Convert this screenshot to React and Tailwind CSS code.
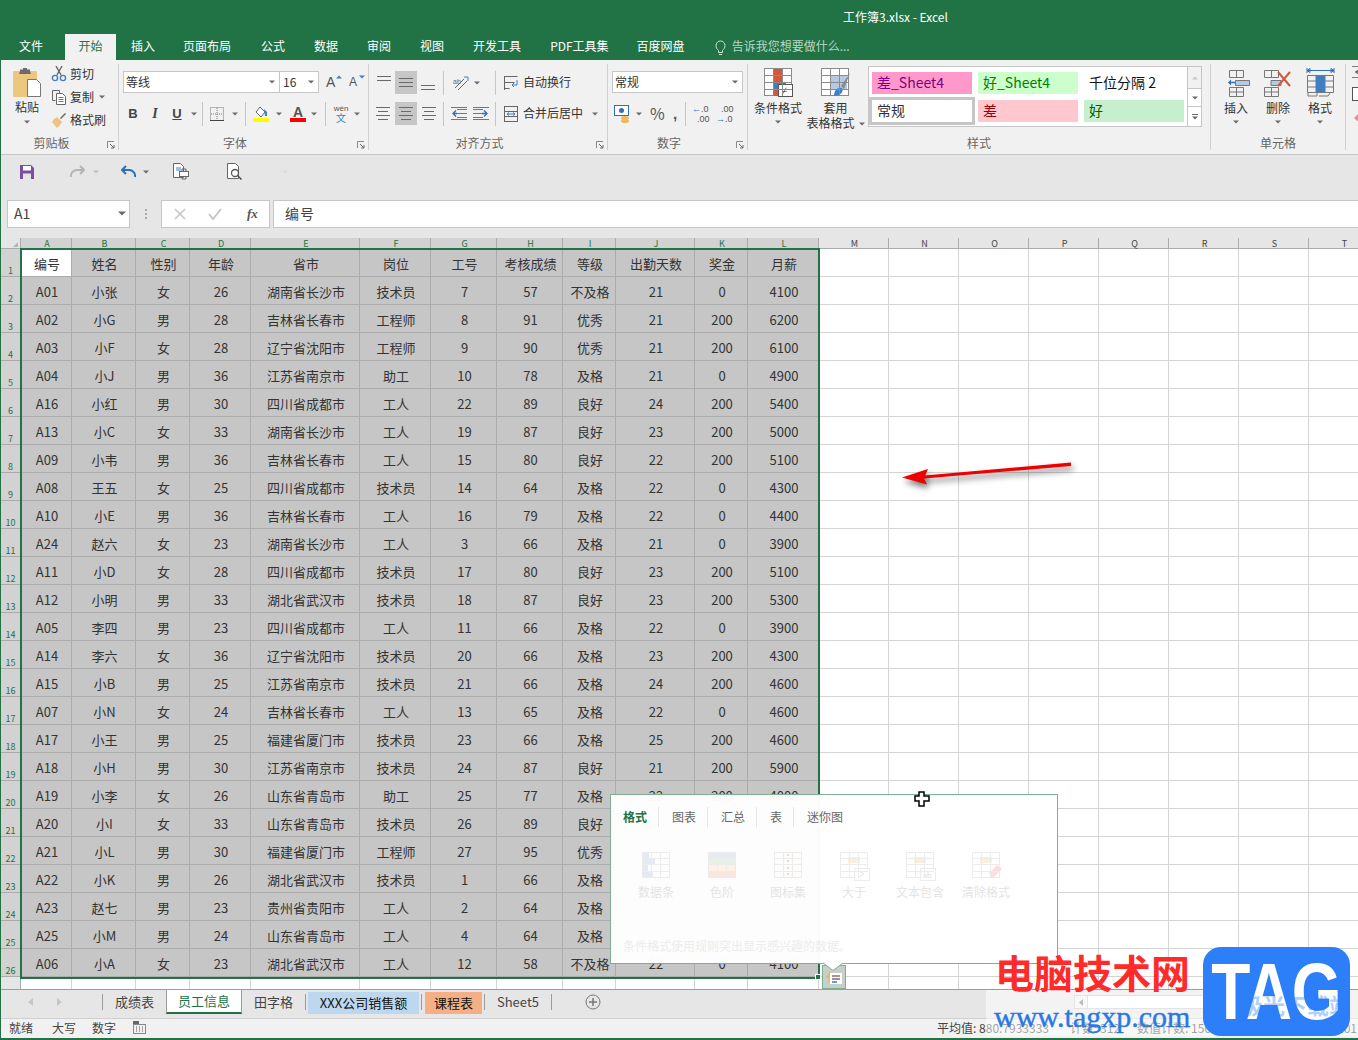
const gridLine = 'border-[#d4d4d4]';

const letters = ['A', 'B', 'C', 'D', 'E', 'F', 'G', 'H', 'I', 'J', 'K', 'L', 'M', 'N', 'O', 'P', 'Q', 'R', 'S', 'T'];

const rows = [
  '编号 姓名 性别 年龄 省市 岗位 工号 考核成绩 等级 出勤天数 奖金 月薪',
  'A01 小张 女 26 湖南省长沙市 技术员 7 57 不及格 21 0 4100',
  'A02 小G 男 28 吉林省长春市 工程师 8 91 优秀 21 200 6200',
  'A03 小F 女 28 辽宁省沈阳市 工程师 9 90 优秀 21 200 6100',
  'A04 小J 男 36 江苏省南京市 助工 10 78 及格 21 0 4900',
  'A16 小红 男 30 四川省成都市 工人 22 89 良好 24 200 5400',
  'A13 小C 女 33 湖南省长沙市 工人 19 87 良好 23 200 5000',
  'A09 小韦 男 36 吉林省长春市 工人 15 80 良好 22 200 5100',
  'A08 王五 女 25 四川省成都市 技术员 14 64 及格 22 0 4300',
  'A10 小E 男 36 吉林省长春市 工人 16 79 及格 22 0 4400',
  'A24 赵六 女 23 湖南省长沙市 工人 3 66 及格 21 0 3900',
  'A11 小D 女 28 四川省成都市 技术员 17 80 良好 23 200 5100',
  'A12 小明 男 33 湖北省武汉市 技术员 18 87 良好 23 200 5300',
  'A05 李四 男 23 四川省成都市 工人 11 66 及格 22 0 3900',
  'A14 李六 女 36 辽宁省沈阳市 技术员 20 66 及格 23 200 4300',
  'A15 小B 男 25 江苏省南京市 技术员 21 66 及格 24 200 4600',
  'A07 小N 女 24 吉林省长春市 工人 13 65 及格 22 0 4600',
  'A17 小王 男 25 福建省厦门市 技术员 23 66 及格 25 200 4600',
  'A18 小H 男 30 江苏省南京市 技术员 24 87 良好 21 200 5900',
  'A19 小李 女 26 山东省青岛市 助工 25 77 及格 22 200 4000',
  'A20 小I 女 33 山东省青岛市 技术员 26 89 良好',
  'A21 小L 男 30 福建省厦门市 工程师 27 95 优秀',
  'A22 小K 男 26 湖北省武汉市 技术员 1 66 及格',
  'A23 赵七 男 23 贵州省贵阳市 工人 2 64 及格',
  'A25 小M 男 24 山东省青岛市 工人 4 64 及格',
  'A06 小A 女 23 湖北省武汉市 工人 12 58 不及格 22 0 4100',
].map((r) => r.split(' '));

function Ico({ w, h, className = '', children }) {
  return (
    <svg width={w} height={h} viewBox={`0 0 ${w} ${h}`} fill="none" className={`shrink-0 ${className}`}>
      {children}
    </svg>
  );
}

function Chev({ className = '', color = '#6a6a6a' }) {
  return (
    <Ico w={6} h={4} className={className}>
      <path d="M0 0.5h6L3 3.5z" fill={color} />
    </Ico>
  );
}

function Launcher() {
  return (
    <Ico w={8} h={8} className="absolute right-[3px] bottom-[1px]">
      <path d="M0.5 7V0.5H7" stroke="#8a8a8a" />
      <path d="M3 3l4 4M7 4v3H4" stroke="#6a6a6a" />
    </Ico>
  );
}

function Lines({ widths, x = 0 }) {
  // stack of text lines used by the alignment buttons
  return (
    <Ico w={16} h={widths.length * 4}>
      {widths.map((l, i) => (
        <path key={i} d={`M${x + (16 - l) / 2} ${i * 4 + 1.5}h${l}`} stroke="#6a6a6a" />
      ))}
    </Ico>
  );
}

function GroupLabel({ children, className = '' }) {
  return <div className={`mt-auto h-[14px] text-center text-[12px] leading-[14px] text-[#666] ${className}`}>{children}</div>;
}

function Sep({ className = '' }) {
  return <div className={`h-[24px] w-px shrink-0 bg-[#c6c6c6] ${className}`} />;
}

function Clipboard() {
  return (
    <div className="ml-[6px] flex w-[40px] flex-col items-center pt-[4px]">
      <Ico w={29} h={29}>
        <rect x="0" y="3" width="24" height="26" rx="1" fill="#edc67f" />
        <path d="M7 3V1.5h3V0h4v1.5h3V3l1 3H6z" fill="#6b6b6b" />
        <path d="M14.5 11.5h9l4 4v13h-13z" fill="#fff" stroke="#777" />
      </Ico>
      <div className="mt-[3px] text-[12px] leading-[14px] text-[#333]">粘贴</div>
      <Chev className="mt-[6px]" />
    </div>
  );
}

function ClipActions() {
  return (
    <div className="ml-[4px] flex flex-col gap-[3px] text-[12px] text-[#333]">
      <div className="flex h-[20px] items-center">
        <Ico w={16} h={16}>
          <path d="M5 0l5 9M11 0L6 9" stroke="#666" strokeWidth="1.4" />
          <circle cx="4" cy="12" r="2.6" stroke="#3f7fc1" strokeWidth="1.4" />
          <circle cx="12" cy="12" r="2.6" stroke="#3f7fc1" strokeWidth="1.4" />
        </Ico>
        <span className="ml-[3px]">剪切</span>
      </div>
      <div className="flex h-[20px] items-center">
        <Ico w={16} h={16}>
          <path d="M1.5 1.5h7v3M1.5 1.5v10h3" stroke="#666" />
          <path d="M5.5 4.5h6l3 3v8h-9z" fill="#fff" stroke="#666" />
          <path d="M7.5 8.5h5M7.5 10.5h5M7.5 12.5h5" stroke="#3f7fc1" />
        </Ico>
        <span className="ml-[3px]">复制</span>
        <Chev className="ml-[5px]" />
      </div>
      <div className="flex h-[20px] items-center">
        <Ico w={16} h={16}>
          <path d="M9 6l5-5 1 1-5 5z" fill="#666" />
          <path d="M3 7l3-2 5 5-2 3-3 3-5-6z" fill="#eec27f" />
        </Ico>
        <span className="ml-[3px]">格式刷</span>
      </div>
    </div>
  );
}

function FontGroup() {
  return (
    <div className="flex h-full flex-col px-[3px]">
      <div className="mt-[7px] flex h-[22px] items-center">
        <div className="ml-px flex h-[22px] w-[157px] items-center border border-[#c6c6c6] bg-white pl-[2px] text-[12px] text-[#333]">
          等线
          <Chev className="mr-[4px] ml-auto" />
        </div>
        <div className="flex h-[22px] w-[39px] items-center border border-l-0 border-[#c6c6c6] bg-white pl-[3px] text-[12px] text-[#333]">
          16
          <Chev className="mr-[4px] ml-auto" />
        </div>
        <div className="relative ml-[7px] w-[14px] font-['Liberation_Sans'] text-[14px] leading-[14px] text-[#555]">
          A
          <Ico w={6} h={4} className="absolute top-0 -right-[2px]"><path d="M0 3.5h6L3 0.5z" fill="#3f7fc1" /></Ico>
        </div>
        <div className="relative ml-[9px] w-[13px] font-['Liberation_Sans'] text-[12px] leading-[14px] text-[#555]">
          A
          <Ico w={6} h={4} className="absolute top-0 -right-[3px]"><path d="M0 0.5h6L3 3.5z" fill="#3f7fc1" /></Ico>
        </div>
      </div>
      <div className="mt-[9px] flex h-[23px] items-center text-[#444]">
        <div className="w-[22px] text-center font-['Liberation_Sans'] text-[13px] font-bold">B</div>
        <div className="w-[22px] text-center font-['Liberation_Serif'] text-[14px] font-bold italic">I</div>
        <div className="w-[22px] text-center font-['Liberation_Sans'] text-[13px] font-bold underline">U</div>
        <Chev className="ml-[3px]" />
        <Sep className="ml-[5px]" />
        <div className="flex w-[28px] justify-center">
          <Ico w={14} h={14}>
            <rect x="0.5" y="0.5" width="13" height="13" stroke="#777" strokeDasharray="1 1" />
            <path d="M7 1v12M1 7h12" stroke="#777" strokeDasharray="1 1" />
            <path d="M0 13.5h14" stroke="#444" />
          </Ico>
        </div>
        <Chev className="ml-px" />
        <Sep className="ml-[7px]" />
        <div className="flex w-[30px] flex-col items-center">
          <Ico w={16} h={12}>
            <path d="M7 1l5 5-4 5-5-5z" fill="#fff" stroke="#666" />
            <path d="M11 3l3 3v4h-2z" fill="#3f7fc1" />
          </Ico>
          <div className="h-[4px] w-[16px] bg-[#ffff00]" />
        </div>
        <Chev />
        <div className="ml-[4px] flex w-[24px] flex-col items-center">
          <span className="font-['Liberation_Sans'] text-[14px] leading-[12px] font-bold text-[#555]">A</span>
          <div className="h-[4px] w-[16px] bg-[#ff0000]" />
        </div>
        <Chev className="ml-[1px]" />
        <Sep className="ml-[8px]" />
        <div className="flex w-[30px] flex-col items-center leading-none">
          <span className="font-['Liberation_Sans'] text-[8px] text-[#555]">wén</span>
          <span className="text-[10px] text-[#3f7fc1]">文</span>
        </div>
        <Chev className="-ml-[2px]" />
      </div>
    </div>
  );
}

function AlignGroup() {
  const iconLine = 'flex h-[23px] w-[22px] items-center justify-center';
  return (
    <div className="flex h-full flex-col pl-[4px]">
      <div className="mt-[7px] flex h-[23px] items-center text-[12px] text-[#333]">
        <div className={`${iconLine} items-start pt-[4px]`}><Lines widths={[14, 14]} /></div>
        <div className={`${iconLine} bg-[#c6c6c6]`}><Lines widths={[14, 14, 14]} /></div>
        <div className={`${iconLine} items-end pb-[2px]`}><Lines widths={[14, 14]} /></div>
        <Sep className="ml-[4px]" />
        <div className="ml-[9px] flex w-[16px] justify-center">
          <Ico w={16} h={16}>
            <path d="M2 13l9-9M5 15l9-9" stroke="#666" />
            <path d="M11 2h4v4" stroke="#3f7fc1" />
            <text x="0" y="9" fontSize="7" fill="#666" fontFamily="Liberation Sans">ab</text>
          </Ico>
        </div>
        <Chev className="ml-[5px]" />
        <Sep className="ml-[15px]" />
        <Ico w={14} h={16} className="ml-[8px]">
          <path d="M0.5 1.5h13M0.5 7.5h10M0.5 13.5h5M0.5 1v14" stroke="#666" />
          <path d="M13 5v5H8M10 8l-2 2 2 2" stroke="#3f7fc1" />
        </Ico>
        <span className="ml-[5px] pb-[2px]">自动换行</span>
      </div>
      <div className="mt-[8px] flex h-[23px] items-center text-[12px] text-[#333]">
        <div className={iconLine}><Lines widths={[14, 10, 14, 10]} x={-1} /></div>
        <div className={`${iconLine} bg-[#c6c6c6]`}><Lines widths={[14, 10, 14, 10]} /></div>
        <div className={iconLine}><Lines widths={[14, 10, 14, 10]} x={1} /></div>
        <Sep className="ml-[4px]" />
        <Ico w={16} h={13} className="ml-[7px]">
          <path d="M6 2.5h10M6 6.5h10M6 10.5h10M0 0.5h16M0 12.5h16" stroke="#777" />
          <path d="M5 3.500l-3 3 3 3M2 6.500h4" stroke="#2f6fb5" strokeWidth="1.3" />
        </Ico>
        <Ico w={16} h={13} className="ml-[6px]">
          <path d="M0 2.5h10M0 6.5h10M0 10.500h10M0 0.500h16M0 12.500h16" stroke="#777" />
          <path d="M11 3.500l3 3-3 3M14 6.500h-5" stroke="#2f6fb5" strokeWidth="1.3" />
        </Ico>
        <Sep className="ml-[6px]" />
        <Ico w={14} h={16} className="ml-[8px]">
          <rect x="0.5" y="0.5" width="13" height="15" stroke="#666" />
          <path d="M0 5.500h14M0 10.500h14" stroke="#666" />
          <path d="M3 8h8M3 8l2-1.500M3 8l2 1.500M11 8L9 6.500M11 8L9 9.500" stroke="#3f7fc1" />
        </Ico>
        <span className="ml-[5px] pb-[2px]">合并后居中</span>
        <Chev className="ml-[9px]" />
      </div>
    </div>
  );
}

function NumberGroup() {
  return (
    <div className="flex h-full flex-col pl-[4px]">
      <div className="mt-[7px] flex h-[22px] w-[131px] items-center border border-[#c6c6c6] bg-white pl-[2px] text-[12px] text-[#333]">
        常规
        <Chev className="mr-[4px] ml-auto" />
      </div>
      <div className="mt-[9px] flex h-[23px] items-center text-[#555]">
        <Ico w={17} h={18} className="ml-[2px]">
          <rect x="0.500" y="0.500" width="14" height="10" fill="#fff" stroke="#2f6fb5" />
          <circle cx="7.500" cy="5.500" r="2.500" fill="#2f6fb5" />
          <ellipse cx="11" cy="13" rx="4" ry="2" fill="#e8b95f" />
          <ellipse cx="11" cy="16" rx="4" ry="2" fill="#e8b95f" />
        </Ico>
        <Chev className="ml-[5px]" />
        <span className="ml-[8px] w-[14px] text-[16px] leading-[23px]">%</span>
        <span className="ml-[9px] w-[6px] font-['Liberation_Sans'] text-[15px] leading-[19px] font-bold">,</span>
        <Sep className="ml-[6px]" />
        <div className="ml-[6px] flex w-[15px] flex-col font-['Liberation_Sans'] text-[9px] leading-[10px] text-[#555]">
          <span className="whitespace-nowrap"><span className="text-[#2f6fb5]">←</span>.0</span>
          <span className="pl-[5px]">.00</span>
        </div>
        <div className="ml-[9px] flex w-[15px] flex-col font-['Liberation_Sans'] text-[9px] leading-[10px] text-[#555]">
          <span className="pl-[5px]">.00</span>
          <span className="whitespace-nowrap"><span className="text-[#2f6fb5]">→</span>.0</span>
        </div>
      </div>
    </div>
  );
}

function MiniGrid({ children, w = 29, h = 29 }) {
  return (
    <Ico w={w} h={h}>
      <rect x="0.500" y="0.500" width="27" height="27" fill="#fff" stroke="#8a8a8a" />
      {children}
      <path d="M9.500 0v28M18.500 0v28M0 7.500h28M0 14.500h28M0 21.500h28" stroke="#8a8a8a" />
    </Ico>
  );
}

function StylesGroup() {
  return (
    <div className="flex h-full flex-col">
      <div className="flex items-start">
        <div className="ml-[5px] flex w-[50px] flex-col items-center pt-[4px] text-[12px] leading-[14px] text-[#333]">
          <MiniGrid>
            <rect x="10" y="1" width="8" height="6" fill="#d2583a" />
            <rect x="10" y="8" width="8" height="6" fill="#d2583a" />
            <rect x="10" y="15" width="12" height="6" fill="#3f7fc1" />
            <rect x="10" y="22" width="5" height="6" fill="#d2583a" />
            <rect x="14.500" y="16.500" width="14" height="12" fill="#fff" stroke="#555" />
            <text x="18" y="26" fontSize="10" fill="#333" fontFamily="Liberation Sans">≠</text>
          </MiniGrid>
          <span className="mt-[4px]">条件格式</span>
          <Chev className="mt-[5px]" />
        </div>
        <div className="flex w-[65px] flex-col items-center pt-[4px] text-[12px] leading-[15px] text-[#333]">
          <MiniGrid>
            <rect x="10" y="8" width="16" height="14" fill="#b5c9e2" />
            <path d="M29 5l-9 13 3 3z" fill="#8a8a8a" />
            <path d="M13 28c0-6 4-9 8-8 2 3-1 8-8 8z" fill="#3f7fc1" />
          </MiniGrid>
          <span className="mt-[3px]">套用</span>
          <span>表格格式<Chev className="mb-[2px] ml-[4px] inline" /></span>
        </div>
        <div className="mt-[2px] flex h-[61px] w-[334px] border border-[#c6c6c6] bg-white text-[14px] leading-[20px]">
          <div className="grid h-fit grid-cols-[100px_100px_100px] gap-x-[6px] gap-y-[6px] pt-[5px] pl-[3px]">
            <div className="h-[22px] bg-[#ff99cc] pl-[5px] text-[#800080]">差_Sheet4</div>
            <div className="h-[22px] bg-[#ccffcc] pl-[5px] text-[#008000]">好_Sheet4</div>
            <div className="h-[22px] pl-[5px] text-[#111]">千位分隔 2</div>
            <div className="h-[22px] bg-white pl-[5px] text-[#333] outline-[3px] outline-[#c6c6c6]">常规</div>
            <div className="h-[22px] bg-[#ffc7ce] pl-[5px] text-[#9c0006]">差</div>
            <div className="h-[22px] bg-[#c6efce] pl-[5px] text-[#006100]">好</div>
          </div>
          <div className="ml-[3px] flex w-[14px] flex-col border-l border-[#c6c6c6]">
            <div className="flex h-[21px] items-center justify-center bg-[#f1f1f1]">
              <Ico w={6} h={4}><path d="M0 3.500h6L3 0.500z" fill="#c6c6c6" /></Ico>
            </div>
            <div className="flex h-[19px] items-center justify-center border-y border-[#c6c6c6]"><Chev /></div>
            <div className="flex h-[19px] flex-col items-center justify-center">
              <div className="mb-px h-px w-[6px] bg-[#6a6a6a]" />
              <Chev />
            </div>
          </div>
        </div>
      </div>
      <GroupLabel>样式</GroupLabel>
    </div>
  );
}

function CellsGroup() {
  const col = 'flex w-[42px] flex-col items-center pt-[4px] text-[12px] leading-[14px] text-[#333]';
  return (
    <div className="flex pl-[4px]">
      <div className={col}>
        <Ico w={27} h={29}>
          <path d="M6.500 2.500h14v7h-14zM13.500 2v8M6.500 19.500h14v9h-14zM6.500 24h14M13.500 19v10" stroke="#777" />
          <path d="M6 14.500h8" stroke="#2f6fb5" strokeWidth="1.500" />
          <path d="M5 14.500l3-3v6z" fill="#2f6fb5" />
          <path d="M12.500 12.500h14v5h-14z" fill="#b5c9e2" stroke="#777" />
        </Ico>
        <span className="mt-[4px]">插入</span>
        <Chev className="mt-[5px]" />
      </div>
      <div className={col}>
        <Ico w={30} h={29}>
          <path d="M1.500 2.500h14v7h-14zM8.500 2v8M1.500 19.500h14v9h-14zM1.500 24h14M8.500 19v10" stroke="#777" />
          <path d="M8 12.500h10v5H8z" fill="#b5c9e2" stroke="#777" />
          <path d="M15 4l12 14M27 4L15 18" stroke="#d2583a" strokeWidth="2" />
        </Ico>
        <span className="mt-[4px]">删除</span>
        <Chev className="mt-[5px]" />
      </div>
      <div className={col}>
        <Ico w={29} h={29}>
          <path d="M1 2.500h27M1 0v5M28 0v5M1 2.500l3-2v4zM28 2.500l-3-2v4z" stroke="#2f6fb5" />
          <path d="M1.500 7.500h26v17h-26zM1.500 13h26M1.500 19h26M10 7v17M19 7v17" stroke="#777" />
          <rect x="10" y="8" width="9" height="16" fill="#3f7fc1" />
          <path d="M2 25v3h9v-3M13 28h9l2-3" stroke="#777" />
        </Ico>
        <span className="mt-[4px]">格式</span>
        <Chev className="mt-[5px]" />
      </div>
    </div>
  );
}

function Ribbon() {
  const group = 'relative my-[4px] flex shrink-0 flex-col border-r border-[#d0d0d0]';
  return (
    <div className="flex h-[95px] shrink-0 overflow-hidden border-b border-[#c6c6c6] bg-[#f1f1f1]">
      <div className={`${group} w-[118px]`}>
        <div className="flex">
          <Clipboard />
          <ClipActions />
        </div>
        <GroupLabel className="pr-[16px]">剪贴板</GroupLabel>
        <Launcher />
      </div>
      <div className={`${group} w-[250px]`}>
        <div className="h-[72px]"><FontGroup /></div>
        <GroupLabel className="pr-[17px]">字体</GroupLabel>
        <Launcher />
      </div>
      <div className={`${group} w-[239px]`}>
        <div className="h-[72px]"><AlignGroup /></div>
        <GroupLabel className="pr-[17px]">对齐方式</GroupLabel>
        <Launcher />
      </div>
      <div className={`${group} w-[140px]`}>
        <div className="h-[72px]"><NumberGroup /></div>
        <GroupLabel className="pr-[17px]">数字</GroupLabel>
        <Launcher />
      </div>
      <div className={`${group} w-[463px]`}>
        <StylesGroup />
      </div>
      <div className={`${group} w-[135px]`}>
        <CellsGroup />
        <GroupLabel>单元格</GroupLabel>
      </div>
      <div className="flex flex-col gap-[9px] pt-[6px] pl-[6px]">
        <Ico w={10} h={12}><path d="M0 0h10v2L4 6l6 4v2H0" stroke="#555" strokeWidth="1.500" /></Ico>
        <Ico w={10} h={14}><rect x="0.500" y="0.500" width="12" height="13" stroke="#555" fill="#fff" /></Ico>
        <Ico w={10} h={12}><path d="M2 8l6-6 2 6-5 3z" fill="#e58fa0" /></Ico>
      </div>
    </div>
  );
}

function QuickAccess() {
  return (
    <div className="flex h-[35px] shrink-0 items-center bg-[#e6e6e6] pb-[2px]">
      <Ico w={14} h={14} className="ml-[19px]">
        <path d="M0 0h11l3 3v11H0z" fill="#7b4ea3" />
        <rect x="3" y="1" width="8" height="4.500" fill="#fff" />
        <rect x="3" y="8.500" width="8" height="5.500" fill="#e6e6e6" />
      </Ico>
      <Ico w={15} h={13} className="ml-[36px]">
        <path d="M14 12a6 6 0 0 0-6-7H1M5 1L1 5l4 4" stroke="#b4b4b4" strokeWidth="2" transform="matrix(-1 0 0 1 15 0)" />
      </Ico>
      <Chev className="ml-[8px]" color="#c0c0c0" />
      <Ico w={15} h={13} className="ml-[22px]">
        <path d="M14 12a6 6 0 0 0-6-7H1M5 1L1 5l4 4" stroke="#2f6fb5" strokeWidth="2" />
      </Ico>
      <Chev className="ml-[7px]" />
      <Ico w={16} h={17} className="ml-[24px]">
        <path d="M0.500 0.500h7l3 3v11h-10z" fill="#fff" stroke="#666" />
        <path d="M3 5h5M3 7h5" stroke="#3f7fc1" />
        <rect x="6.500" y="8.500" width="9" height="5" fill="#fff" stroke="#666" />
        <path d="M9 8V6h4v2M9 13v3h4v-3" stroke="#666" />
      </Ico>
      <Ico w={16} h={17} className="ml-[38px]">
        <path d="M0.500 0.500h8l3 3v12h-11z" fill="#fff" stroke="#666" />
        <circle cx="8" cy="10" r="3.500" fill="#fff" stroke="#555" strokeWidth="1.300" />
        <path d="M10.500 12.500l4 4" stroke="#555" strokeWidth="1.600" />
      </Ico>
      <Chev className="ml-[39px]" color="#dcdcdc" />
    </div>
  );
}

function FormulaBar() {
  return (
    <div className="flex h-[48px] shrink-0 items-center bg-[#e6e6e6] pb-[1px]">
      <div className="ml-[6px] flex h-[28px] w-[123px] items-center border border-[#c6c6c6] bg-white pl-[6px] text-[14px] text-[#444]">
        A1
        <Ico w={8} h={5} className="mr-[3px] ml-auto"><path d="M0 0.500h8L4 4.500z" fill="#6a6a6a" /></Ico>
      </div>
      <div className="ml-[15px] flex flex-col gap-[2px]">
        <div className="h-[2px] w-[2px] bg-[#aaa]" />
        <div className="h-[2px] w-[2px] bg-[#aaa]" />
        <div className="h-[2px] w-[2px] bg-[#aaa]" />
      </div>
      <div className="ml-[14px] flex h-[28px] w-[109px] items-center border border-[#c6c6c6] bg-white">
        <Ico w={12} h={12} className="ml-[12px]"><path d="M1 1l10 10M11 1L1 11" stroke="#c6c6c6" strokeWidth="1.600" /></Ico>
        <Ico w={14} h={12} className="ml-[22px]"><path d="M1 6l4 5 8-10" stroke="#c6c6c6" strokeWidth="2" /></Ico>
        <span className="ml-[25px] font-['Liberation_Serif'] text-[13px] font-bold text-[#555] italic">fx</span>
      </div>
      <div className="ml-[3px] flex h-[28px] flex-1 items-center border-y border-l border-[#c6c6c6] bg-white pl-[11px] text-[14px] tracking-[1px] text-[#444]">
        编号
      </div>
    </div>
  );
}

function Row({ index, cells }) {
  return (
    <>
      <div className="flex items-end justify-center border-r border-b border-[#ababab] bg-[#d2d2d2] text-[9px] leading-[11px] text-[#217346]">
        {index + 1}
      </div>
      {Array.from({ length: 12 }).map((_, i) => (
        <div
          key={i}
          className={
            index === 0 && i === 0
              ? 'flex items-center justify-center border-r border-b border-[#ababab] bg-white pt-[2px] pl-[2px] whitespace-nowrap'
              : 'flex items-center justify-center border-r border-b border-[#ababab] bg-[#c6c6c6] pt-[2px] pl-[2px] whitespace-nowrap'
          }
        >
          {cells[i]}
        </div>
      ))}
      {Array.from({ length: 8 }).map((_, i) => (
        <div key={i} className={`border-r border-b ${gridLine}`} />
      ))}
    </>
  );
}

function Sheet() {
  return (
    <div className="relative h-[751px] shrink-0 overflow-hidden bg-white">
      <div className="grid grid-cols-[20px_51px_64px_54px_61px_109px_71px_66px_66px_53px_79px_53px_71px_70px_70px_70px_70px_70px_70px_70px_70px] grid-rows-[11px_repeat(26,28px)_12px] text-[13px] text-[#333]">
        <div className="flex items-end justify-end border-r border-b border-[#ababab] bg-[#e6e6e6] pr-[2px] pb-[1px]">
          <Ico w={5} h={5}><path d="M5 0v5H0z" fill="#b4b4b4" /></Ico>
        </div>
        {letters.map((l, i) => (
          <div
            key={l}
            className={
              i < 12
                ? 'flex items-center justify-center border-r border-b border-[#ababab] bg-[#d2d2d2] pl-[2px] text-[9px] leading-none text-[#217346]'
                : 'flex items-center justify-center border-r border-b border-[#ababab] bg-[#e6e6e6] pl-[2px] text-[9px] leading-none text-[#444]'
            }
          >
            {l}
          </div>
        ))}
        {rows.map((r, ri) => (
          <Row key={ri} index={ri} cells={r} />
        ))}
        <div className="border-r border-[#ababab] bg-[#e6e6e6]" />
        {letters.map((l) => (
          <div key={l} className={`border-r ${gridLine}`} />
        ))}
      </div>
      {/* selection frame */}
      <div className="absolute top-[10px] left-[19px] h-[731px] w-[800px] border-2 border-[#217346]" />
      <div className="absolute top-[736px] left-[814px] h-[6px] w-[6px] border border-white bg-[#217346]" />
    </div>
  );
}

function SheetTabs() {
  return (
    <div className="h-[29px] shrink-0 overflow-hidden border-t border-[#9c9c9c] bg-[#e6e6e6] text-[13px] text-[#444]">
      <div className="flex h-[24px] items-stretch">
        <div className="flex w-[101px] items-center">
          <Ico w={5} h={8} className="ml-[27px]"><path d="M5 0v8L0 4z" fill="#c6c6c6" /></Ico>
          <Ico w={5} h={8} className="ml-[24px]"><path d="M0 0v8l5-4z" fill="#c6c6c6" /></Ico>
        </div>
        <div className="my-[4px] w-px bg-[#9c9c9c]" />
        <div className="flex w-[63px] items-center justify-center">成绩表</div>
        <div className="-mt-px flex w-[76px] items-center justify-center border-x border-b-2 border-[#9c9c9c] border-b-[#217346] bg-white text-[#217346]">员工信息</div>
        <div className="flex w-[63px] items-center justify-center">田字格</div>
        <div className="my-[4px] w-px bg-[#9c9c9c]" />
        <div className="mt-[2px] ml-[2px] flex w-[111px] items-center justify-center bg-[#bdd7ee] text-[#111]">XXX公司销售额</div>
        <div className="my-[4px] ml-[2px] w-px bg-[#9c9c9c]" />
        <div className="mt-[2px] ml-[3px] flex w-[57px] items-center justify-center bg-[#f4b084] text-[#111]">课程表</div>
        <div className="my-[4px] ml-[2px] w-px bg-[#9c9c9c]" />
        <div className="flex w-[66px] items-center justify-center">Sheet5</div>
        <div className="my-[4px] w-px bg-[#9c9c9c]" />
        <div className="ml-[33px] flex items-center">
          <Ico w={16} h={16}>
            <circle cx="8" cy="8" r="7" stroke="#777" />
            <path d="M8 4v8M4 8h8" stroke="#777" strokeWidth="1.500" />
          </Ico>
        </div>
        <div className="ml-[473px] flex items-center">
          <div className="flex h-[14px] w-[14px] items-center justify-center border border-[#c6c6c6] bg-[#f1f1f1]">
            <Ico w={4} h={7}><path d="M4 0v7L0 3.500z" fill="#777" /></Ico>
          </div>
          <div className="h-[14px] w-[240px] border-y border-[#c6c6c6] bg-white" />
          <span className="ml-[2px] text-[10px] text-[#777]">AA</span>
        </div>
      </div>
    </div>
  );
}

function StatusBar() {
  return (
    <div className="flex h-[20px] shrink-0 items-center overflow-hidden border-t border-[#d0d0d0] bg-[#f1f1f1] pb-[2px] pl-[8px] text-[12px] whitespace-nowrap text-[#444]">
      <span>就绪</span>
      <span className="ml-[19px]">大写</span>
      <span className="ml-[16px]">数字</span>
      <Ico w={13} h={13} className="ml-[17px]">
        <rect x="0" y="0" width="6" height="4" fill="#666" />
        <rect x="0.500" y="3.500" width="12" height="9" stroke="#888" />
        <path d="M3 6h1M6 6h1M9 6h1M3 8h1M6 8h1M9 8h1M3 10h1M6 10h1M9 10h1" stroke="#555" />
      </Ico>
      <span className="ml-[791px] w-[133px]">平均值: 880.7933333</span>
      <span className="w-[67px]">计数: 312</span>
      <span className="w-[91px]">数值计数: 150</span>
      <span className="w-[67px]">最小值: 0</span>
      <span className="w-[63px]">最大值: 101</span>
    </div>
  );
}

function FadedIcon({ label, children }) {
  return (
    <div className="flex w-[66px] flex-col items-center">
      <Ico w={34} h={31}>
        <rect x="3.500" y="1.500" width="27" height="25" stroke="#ececec" />
        {children}
        <path d="M12.500 1v26M21.500 1v26M3 7.500h28M3 13.500h28M3 20.500h28" stroke="#ececec" />
      </Ico>
      <span className="mt-[2px] text-[12px] leading-[16px] whitespace-nowrap text-[#e4e4e4]">{label}</span>
    </div>
  );
}

function AnalysisPopup() {
  const tabSep = 'mr-[13px] ml-[11px] h-[20px] w-px bg-[#e6e6e6]';
  return (
    <>
      <div className="absolute top-[794px] left-[609px] flex h-[170px] w-[448px] flex-col border border-[#7fae94] bg-white/[0.97] px-[12px]">
        <div className="mt-[12px] flex items-center text-[12px] leading-[20px] text-[#666]">
          <span className="font-bold text-[#217346]">格式</span>
          <div className={tabSep} />
          <span>图表</span>
          <div className={tabSep} />
          <span>汇总</span>
          <div className={tabSep} />
          <span>表</span>
          <div className={tabSep} />
          <span>迷你图</span>
        </div>
        <div className="mt-[24px] flex">
          <FadedIcon label="数据条">
            <path d="M4 2h6v5H4zM4 8h12v5H4zM4 14h5v6H4zM4 21h10v5H4z" fill="#e3eaf4" />
          </FadedIcon>
          <FadedIcon label="色阶">
            <rect x="4" y="2" width="26" height="6" fill="#e6ebf3" />
            <rect x="4" y="8" width="26" height="6" fill="#e9f1e6" />
            <rect x="4" y="14" width="26" height="6" fill="#fcf1e2" />
            <rect x="4" y="20" width="26" height="6" fill="#fae6df" />
          </FadedIcon>
          <FadedIcon label="图标集">
            <path d="M16 4h2M16 10h2M16 17h2M16 23h2" stroke="#f2d9c0" strokeWidth="2" />
          </FadedIcon>
          <FadedIcon label="大于">
            <rect x="11" y="6" width="12" height="6" fill="#fbeedb" />
            <rect x="17.500" y="17.500" width="15" height="12" fill="#fff" stroke="#ececec" />
            <path d="M22 20l5 3-5 3" stroke="#e4e4e4" />
          </FadedIcon>
          <FadedIcon label="文本包含">
            <rect x="11" y="6" width="12" height="6" fill="#fbeedb" />
            <rect x="17.500" y="17.500" width="15" height="12" fill="#fff" stroke="#ececec" />
            <text x="20" y="27" fontSize="9" fill="#e0e0e0" fontFamily="Liberation Serif">ab</text>
          </FadedIcon>
          <FadedIcon label="清除格式">
            <rect x="11" y="6" width="12" height="6" fill="#fbeedb" />
            <path d="M20 22l8-8 5 4-8 8h-3z" fill="#fbdde3" />
          </FadedIcon>
        </div>
        <div className="mt-auto mb-[9px] text-[12px] leading-[16px] text-[#ececec]">条件格式使用规则突出显示感兴趣的数据。</div>
      </div>
      {/* quick analysis button */}
      <div className="absolute top-[965px] left-[821px] flex h-[24px] w-[24px] items-center justify-center border border-[#7fae94] bg-[#c6cfc9]">
        <Ico w={16} h={15}>
          <path d="M4 0L0 8h3L1 15l6-9H4z" fill="#e8b95f" />
          <rect x="4" y="3" width="12" height="11" fill="#fff" />
          <path d="M6 6h8" stroke="#d2583a" strokeWidth="1.500" />
          <path d="M6 9h8M6 12h5" stroke="#3f7fc1" strokeWidth="1.500" />
        </Ico>
      </div>
      <Ico w={20} h={9} className="absolute top-[962px] left-[822px]">
        <path d="M0 1h20L10 8.500z" fill="#fff" />
        <path d="M0 1l10 7.500L20 1" stroke="#7fae94" />
      </Ico>
    </>
  );
}

function CellCursor() {
  return (
    <Ico w={16} h={16} className="absolute top-[791px] left-[913px]">
      <path d="M5 1h5v4h5v5h-5v5H5v-5H1V5h4z" fill="#fff" stroke="#000" strokeWidth="1.500" />
    </Ico>
  );
}

function RedArrow() {
  return (
    <svg
      width="176"
      height="32"
      viewBox="0 0 176 32"
      className="absolute top-[458px] left-[898px] drop-shadow-[2px_4px_3px_rgba(0,0,0,0.55)]"
    >
      <path d="M172 4.500L3 19.500l25 7-3-6 147-12.500z" fill="#ee0000" />
      <path d="M3 19.500L29 11l-4 9.500z" fill="#ee0000" />
    </svg>
  );
}

function Watermark() {
  return (
    <>
      <div className="absolute top-[990px] left-[985px] h-[46px] w-[372px] bg-white/50" />
      <div className="absolute top-[949px] left-[994px] text-[39px] leading-[44px] font-bold whitespace-nowrap text-[#ff2a2a]">电脑技术网</div>
      <div className="absolute top-[1000px] left-[993px] font-['Liberation_Serif'] text-[30px] leading-[34px] whitespace-nowrap text-[#2a78e4] [-webkit-text-stroke:0.4px_#2a78e4]">www.tagxp.com</div>
      <div className="absolute top-[947px] left-[1202px] flex h-[89px] w-[147px] items-center justify-center overflow-hidden rounded-[18px] bg-[#2d7ff9]">
        <span className="scale-x-[0.8] font-['Liberation_Sans'] text-[80px] leading-[80px] font-bold text-white">TAG</span>
        <span className="absolute top-[44px] left-[38px] text-[22px] leading-[26px] font-bold whitespace-nowrap text-[#2d7ff9]/40">极光下载站</span>
      </div>
    </>
  );
}

export default function App() {
  return (
    <div className="relative flex h-[1040px] w-[1358px] flex-col overflow-hidden border-b-2 border-l border-[#217346] bg-white font-['Noto_Sans_CJK_SC','Liberation_Sans',sans-serif]">
      {/* title bar */}
      <div className="flex h-[34px] shrink-0 items-center justify-center bg-[#217346] pb-[1px] pl-[432px] text-[12px] text-white">工作簿3.xlsx - Excel</div>
      {/* ribbon tabs */}
      <div className="flex h-[26px] shrink-0 items-center bg-[#217346] text-[12px] text-white">
        <span className="ml-[18px] pb-[2px]">文件</span>
        <span className="ml-[22px] flex h-[26px] w-[51px] items-center justify-center bg-[#f1f1f1] pb-[2px] text-[#217346]">开始</span>
        <span className="ml-[15px] pb-[2px]">插入</span>
        <span className="ml-[28px] pb-[2px]">页面布局</span>
        <span className="ml-[30px] pb-[2px]">公式</span>
        <span className="ml-[29px] pb-[2px]">数据</span>
        <span className="ml-[29px] pb-[2px]">审阅</span>
        <span className="ml-[29px] pb-[2px]">视图</span>
        <span className="ml-[29px] pb-[2px]">开发工具</span>
        <span className="ml-[29px] pb-[2px]">PDF工具集</span>
        <span className="ml-[28px] pb-[2px]">百度网盘</span>
        <Ico w={11} h={15} className="ml-[30px]">
          <path d="M3.500 10.500C2 9 1 8 1 5.500a4.500 4.500 0 0 1 9 0c0 2.500-1 3.500-2.500 5v2h-4z" stroke="#cfe3d7" />
          <path d="M4 14.500h3" stroke="#cfe3d7" />
        </Ico>
        <span className="ml-[6px] pb-[2px] text-[#b9d6c6]">告诉我您想要做什么...</span>
      </div>
      <Ribbon />
      <QuickAccess />
      <FormulaBar />
      <Sheet />
      <SheetTabs />
      <StatusBar />
      <AnalysisPopup />
      <CellCursor />
      <RedArrow />
      <Watermark />
    </div>
  );
}
